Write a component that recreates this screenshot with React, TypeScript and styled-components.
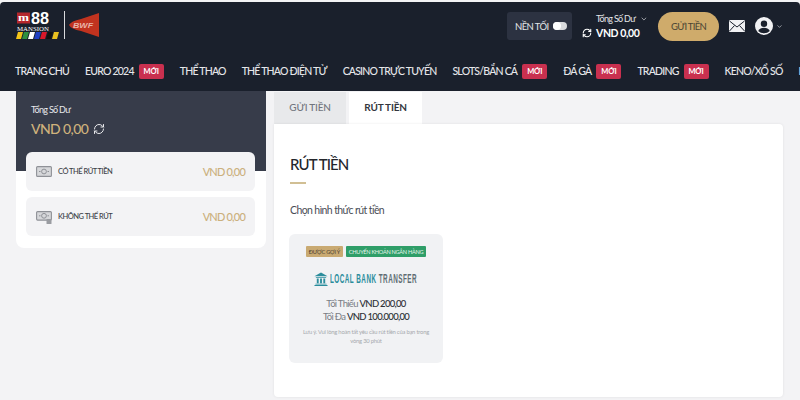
import styled, { createGlobalStyle } from "styled-components";
import { ChevronDown, RefreshCw } from "lucide-react";

const GlobalStyle = createGlobalStyle`
  html, body {
    margin: 0;
    padding: 0;
    width: 800px;
    height: 400px;
    overflow: hidden;
    background: #ffffff;
    font-family: "Lato", "Noto Sans", sans-serif;
  }
  * {
    box-sizing: border-box;
  }
`;

const Page = styled.div`
  width: 800px;
  height: 400px;
  padding-top: 2px;
  overflow: hidden;
  background: #f3f3f5;
`;
const Header = styled.header`
  height: 89px;
  background: #1a202c;
  border-radius: 4px 4px 0 0;
  overflow: hidden;
`;
const TopBar = styled.div`
  display: flex;
  align-items: center;
  height: 47px;
  padding: 1px 17px 0 15px;
`;
const LogoSlot = styled.div`
  display: flex;
  flex: 1;
  align-items: center;
  margin-top: -3px;
`;
const ThemeBox = styled.div`
  display: flex;
  align-items: center;
  gap: 4px;
  width: 65px;
  height: 28px;
  padding-left: 8px;
  border-radius: 3px;
  background: #2c3241;
  color: #e4e5e8;
  font-size: 9.5px;
  letter-spacing: -0.6px;
`;
const Toggle = styled.span`
  position: relative;
  width: 14px;
  height: 8px;
  border-radius: 4px;
  background: #d9dadd;
  &::after {
    content: "";
    position: absolute;
    top: 0;
    left: 0;
    width: 8px;
    height: 8px;
    border-radius: 50%;
    background: #ffffff;
  }
`;
const Balance = styled.div`
  display: flex;
  flex-direction: column;
  gap: 3px;
  width: 66px;
  margin: 0 10px;
  color: #ffffff;
`;
const BalanceLabel = styled.div`
  display: flex;
  align-items: center;
  gap: 5px;
  margin-left: 14px;
  color: #e4e5e8;
  font-size: 9px;
  letter-spacing: -0.7px;
  white-space: nowrap;
`;
const BalanceValue = styled.div`
  display: flex;
  align-items: center;
  gap: 4px;
  font-size: 10.5px;
  font-weight: 700;
  letter-spacing: -0.4px;
  white-space: nowrap;
`;
const DepositButton = styled.button`
  width: 61px;
  height: 29px;
  padding: 0;
  border: 0;
  border-radius: 15px;
  background: #cfab6b;
  color: #4a4433;
  font-family: inherit;
  font-size: 9.5px;
  letter-spacing: -0.7px;
`;
const IconGroup = styled.div`
  display: flex;
  align-items: center;
  gap: 10px;
  margin-left: 10px;
`;
const UserMenu = styled.div`
  display: flex;
  align-items: center;
  gap: 3px;
  color: #e6e7ea;
`;
const Nav = styled.nav`
  display: flex;
  align-items: center;
  gap: 16px;
  height: 42px;
  padding: 2px 0 0 15px;
  white-space: nowrap;
`;
const NavItem = styled.div`
  display: flex;
  flex: none;
  align-items: center;
  gap: 5px;
  color: #e6e7ea;
  font-size: 10.5px;
  font-weight: 500;
  letter-spacing: -0.79px;
`;
const NewBadge = styled.span`
  width: 25px;
  height: 15px;
  border-radius: 2px;
  background: #c9304f;
  color: #ffffff;
  font-size: 7.5px;
  font-weight: 700;
  letter-spacing: -0.2px;
  line-height: 15px;
  text-align: center;
`;
const Main = styled.main`
  display: flex;
  gap: 8px;
  padding: 0 17px 0 16px;
`;
const Sidebar = styled.aside`
  width: 250px;
  height: 157px;
  border-radius: 0 0 8px 8px;
  background: #ffffff;
`;
const SummaryPanel = styled.div`
  height: 80px;
  padding: 13px 15px;
  background: #373c4a;
`;
const SummaryLabel = styled.div`
  color: #e8e9ec;
  font-size: 9px;
  letter-spacing: -0.7px;
`;
const SummaryValue = styled.div`
  display: flex;
  align-items: center;
  gap: 5px;
  margin-top: 5px;
  color: #cfb27c;
  font-size: 14px;
  font-weight: 500;
  letter-spacing: -0.6px;
`;
const RowList = styled.div`
  position: relative;
  display: flex;
  flex-direction: column;
  gap: 6px;
  margin: -19px 11px 0 10px;
`;
const BalanceRow = styled.div`
  display: flex;
  align-items: center;
  gap: 6px;
  height: 39px;
  padding: 0 10px;
  border-radius: 6px;
  background: #f3f3f5;
`;
const RowTitle = styled.span`
  flex: 1;
  color: #3c3f47;
  font-size: 7.5px;
  font-weight: 500;
  letter-spacing: -0.5px;
`;
const RowValue = styled.span`
  color: #cbb07d;
  font-size: 11px;
  font-weight: 500;
  letter-spacing: -0.8px;
`;
const Content = styled.section`
  display: flex;
  flex-direction: column;
  flex: 1;
`;
const Tabs = styled.div`
  display: flex;
  gap: 3px;
  height: 32px;
  margin-top: 1px;
`;
const Tab = styled.div<{ $active?: boolean }>`
  width: ${(props) => (props.$active ? "73px" : "72px")};
  background: ${(props) => (props.$active ? "#ffffff" : "#e8e9eb")};
  color: ${(props) => (props.$active ? "#33363d" : "#71757d")};
  font-size: 10px;
  font-weight: ${(props) => (props.$active ? 700 : 500)};
  letter-spacing: -0.2px;
  line-height: 31px;
  text-align: center;
`;
const Card = styled.div`
  height: 273px;
  padding: 31px 16px 0;
  border-radius: 0 4px 4px 4px;
  background: #ffffff;
  box-shadow: 0 0 3px rgba(0, 0, 0, 0.08);
`;
const Title = styled.h2`
  margin: 0;
  color: #24262c;
  font-size: 15px;
  font-weight: 500;
  line-height: 18px;
  letter-spacing: -0.9px;
`;
const Underline = styled.div`
  width: 16px;
  height: 2px;
  margin-top: 9px;
  background: #d1bf94;
`;
const Prompt = styled.p`
  margin: 20px 0 0;
  color: #4a4d55;
  font-size: 10.5px;
  line-height: 13px;
  letter-spacing: -0.6px;
`;
const MethodCard = styled.div`
  display: flex;
  flex-direction: column;
  align-items: center;
  width: 154px;
  height: 129px;
  margin: 17px 0 0 -1px;
  padding-top: 12px;
  border-radius: 6px;
  background: #f1f2f4;
`;
const Tags = styled.div`
  display: flex;
  gap: 3px;
`;
const Tag = styled.span<{ $bg: string; $color: string }>`
  height: 11px;
  padding: 0 3px;
  border-radius: 1px;
  background: ${(props) => props.$bg};
  color: ${(props) => props.$color};
  font-size: 5.6px;
  letter-spacing: -0.28px;
  line-height: 11px;
  white-space: nowrap;
`;
const BankLogo = styled.div`
  display: flex;
  align-items: center;
  gap: 2px;
  width: 104px;
  height: 15px;
  margin-top: 14px;
  svg {
    flex: none;
  }
`;
const BankName = styled.span`
  flex: none;
  font-family: "Liberation Sans", sans-serif;
  font-size: 13.5px;
  font-weight: 700;
  letter-spacing: 1px;
  white-space: nowrap;
  transform: scaleX(0.47);
  transform-origin: left center;
`;
const BankTeal = styled.span`
  color: #2b8d9c;
`;
const BankGrey = styled.span`
  color: #5f6d73;
`;
const Limits = styled.div`
  margin-top: 11px;
  text-align: center;
`;
const Limit = styled.div`
  color: #7a7d84;
  font-size: 9.5px;
  line-height: 13px;
  letter-spacing: -0.7px;
`;
const LimitValue = styled.span`
  color: #2d3036;
  font-weight: 500;
`;
const Note = styled.p`
  width: 136px;
  margin: 5px 0 0;
  color: #a6a9ae;
  font-size: 5.8px;
  letter-spacing: -0.2px;
  line-height: 8.5px;
  text-align: center;
`;

function MansionLogo() {
  const stripes = ["#f5c518", "#2f8f3e", "#ffffff", "#1f3fc4", "#d8182a", "#111111", "#e8c020"];
  return (
    <svg width="85" height="30" viewBox="0 0 85 30">
      <rect x="2" y="2.5" width="13" height="11" fill="#b5272c" />
      <text x="3" y="11" fontFamily="Liberation Serif" fontSize="10" fontWeight="700" fill="#fff" textLength="11" lengthAdjust="spacingAndGlyphs">m</text>
      <text x="16" y="14" fontFamily="Liberation Sans" fontSize="16" fontWeight="700" fill="#fff" textLength="18" lengthAdjust="spacingAndGlyphs">88</text>
      <text x="2" y="20.5" fontFamily="Liberation Serif" fontSize="5.6" fill="#fff" textLength="32" lengthAdjust="spacingAndGlyphs">MANSION</text>
      {stripes.map((color, i) => (
        <polygon key={color + i} points={`${1 + i * 6},29 ${3 + i * 6},22 ${8 + i * 6},22 ${6 + i * 6},29`} fill={color} />
      ))}
      <rect x="49" y="1" width="1" height="28" fill="#d9dadd" />
      <path d="M84 3 L84 27 L66 21 Q56 19 54 15 Q56 11 66 9 Z" fill="#c1331f" />
      <text x="58" y="17.5" fontFamily="Liberation Sans" fontSize="7.5" fontWeight="700" fontStyle="italic" fill="#e9b5a8" textLength="20" lengthAdjust="spacingAndGlyphs">BWF</text>
    </svg>
  );
}

function MailIcon() {
  return (
    <svg width="16" height="12" viewBox="0 0 16 12">
      <rect width="16" height="12" rx="1" fill="#f1f1f3" />
      <path d="M0.5 1 L8 7 L15.5 1 M0.5 11 L5.5 5.5 M15.5 11 L10.5 5.5" fill="none" stroke="#1a202c" strokeWidth="1" />
    </svg>
  );
}

function UserIcon() {
  return (
    <svg width="18" height="18" viewBox="0 0 18 18">
      <circle cx="9" cy="9" r="9" fill="#f1f1f3" />
      <circle cx="9" cy="6.8" r="3.2" fill="#1a202c" />
      <path d="M3.2 14 Q5 10.8 9 10.8 Q13 10.8 14.8 14 Q12.5 16.2 9 16.2 Q5.5 16.2 3.2 14 Z" fill="#1a202c" />
    </svg>
  );
}

function CashIcon({ locked }: { locked?: boolean }) {
  return (
    <svg width="16" height="14" viewBox="0 0 16 14">
      <rect x="0.6" y="1.6" width="14.8" height={locked ? 8.5 : 9.8} rx="1" fill="#d6d7da" stroke="#8f9197" strokeWidth="1.1" />
      <circle cx="8" cy={locked ? 5.8 : 6.5} r="2.4" fill="none" stroke="#8f9197" strokeWidth="1" />
      <path d={locked ? "M3 5.8h1.5M11.5 5.8H13" : "M3 6.5h1.5M11.5 6.5H13"} stroke="#8f9197" strokeWidth="1" />
      {locked && <rect x="10.5" y="9" width="5" height="5" rx="0.5" fill="#9a9ca1" />}
    </svg>
  );
}

function BankIcon() {
  return (
    <svg width="14" height="14" viewBox="0 0 15 15">
      <path d="M7.5 0.5 L14.5 4.5 L0.5 4.5 Z" fill="#2b8d9c" />
      <path d="M2 5.5h11v1H2z M3 7h2v5H3z M6.5 7h2v5h-2z M10 7h2v5h-2z M1.5 12.5h12v1h-12z M0.5 14h14v1h-14z" fill="#2b8d9c" />
    </svg>
  );
}

const navItems = [
  { label: "TRANG CHỦ" },
  { label: "EURO 2024", isNew: true },
  { label: "THỂ THAO" },
  { label: "THỂ THAO ĐIỆN TỬ" },
  { label: "CASINO TRỰC TUYẾN" },
  { label: "SLOTS/BẮN CÁ", isNew: true },
  { label: "ĐÁ GÀ", isNew: true },
  { label: "TRADING", isNew: true },
  { label: "KENO/XỔ SỐ" },
  { label: "LÔ ĐỀ" },
];

function App() {
  return (
    <Page>
      <GlobalStyle />
      <Header>
        <TopBar>
          <LogoSlot>
            <MansionLogo />
          </LogoSlot>
          <ThemeBox>
            NỀN TỐI
            <Toggle />
          </ThemeBox>
          <Balance>
            <BalanceLabel>
              Tổng Số Dư
              <ChevronDown size={8} />
            </BalanceLabel>
            <BalanceValue>
              <RefreshCw size={10} strokeWidth={2.6} />
              VND 0,00
            </BalanceValue>
          </Balance>
          <DepositButton>GỬI TIỀN</DepositButton>
          <IconGroup>
            <MailIcon />
            <UserMenu>
              <UserIcon />
              <ChevronDown size={7} />
            </UserMenu>
          </IconGroup>
        </TopBar>
        <Nav>
          {navItems.map((item) => (
            <NavItem key={item.label}>
              {item.label}
              {item.isNew && <NewBadge>MỚI</NewBadge>}
            </NavItem>
          ))}
        </Nav>
      </Header>
      <Main>
        <Sidebar>
          <SummaryPanel>
            <SummaryLabel>Tổng Số Dư</SummaryLabel>
            <SummaryValue>
              VND 0,00
              <RefreshCw size={12} color="#e8e9ec" />
            </SummaryValue>
          </SummaryPanel>
          <RowList>
            <BalanceRow>
              <CashIcon />
              <RowTitle>CÓ THỂ RÚT TIỀN</RowTitle>
              <RowValue>VND 0,00</RowValue>
            </BalanceRow>
            <BalanceRow>
              <CashIcon locked />
              <RowTitle>KHÔNG THỂ RÚT</RowTitle>
              <RowValue>VND 0,00</RowValue>
            </BalanceRow>
          </RowList>
        </Sidebar>
        <Content>
          <Tabs>
            <Tab>GỬI TIỀN</Tab>
            <Tab $active>RÚT TIỀN</Tab>
          </Tabs>
          <Card>
            <Title>RÚT TIỀN</Title>
            <Underline />
            <Prompt>Chọn hình thức rút tiền</Prompt>
            <MethodCard>
              <Tags>
                <Tag $bg="#c9aa72" $color="#4a4030">ĐƯỢC GỢI Ý</Tag>
                <Tag $bg="#2f9e68" $color="#e6f5ec">CHUYỂN KHOẢN NGÂN HÀNG</Tag>
              </Tags>
              <BankLogo>
                <BankIcon />
                <BankName>
                  <BankTeal>LOCAL BANK </BankTeal>
                  <BankGrey>TRANSFER</BankGrey>
                </BankName>
              </BankLogo>
              <Limits>
                <Limit>
                  Tối Thiểu <LimitValue>VND 200,00</LimitValue>
                </Limit>
                <Limit>
                  Tối Đa <LimitValue>VND 100.000,00</LimitValue>
                </Limit>
              </Limits>
              <Note>Lưu ý. Vui lòng hoàn tất yêu cầu rút tiền của bạn trong vòng 30 phút</Note>
            </MethodCard>
          </Card>
        </Content>
      </Main>
    </Page>
  );
}

export default App;
